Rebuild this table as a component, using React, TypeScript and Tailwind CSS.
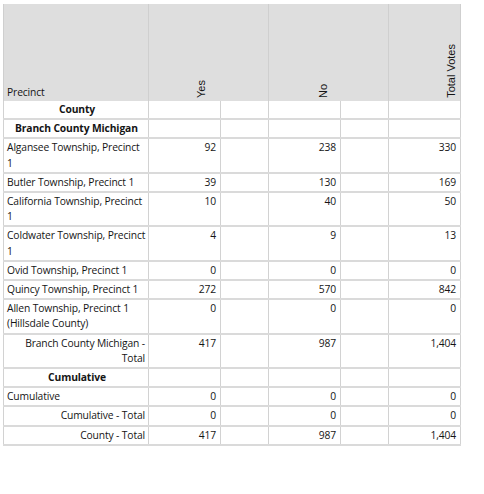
import React from "react";

type Row = {
  label: string;
  yes?: string;
  no?: string;
  total?: string;
  kind?: "group" | "sub" | "total";
};

const rows: Row[] = [
  { label: "County", kind: "group" },
  { label: "Branch County Michigan", kind: "sub" },
  { label: "Algansee Township, Precinct 1", yes: "92", no: "238", total: "330" },
  { label: "Butler Township, Precinct 1", yes: "39", no: "130", total: "169" },
  { label: "California Township, Precinct 1", yes: "10", no: "40", total: "50" },
  { label: "Coldwater Township, Precinct 1", yes: "4", no: "9", total: "13" },
  { label: "Ovid Township, Precinct 1", yes: "0", no: "0", total: "0" },
  { label: "Quincy Township, Precinct 1", yes: "272", no: "570", total: "842" },
  { label: "Allen Township, Precinct 1 (Hillsdale County)", yes: "0", no: "0", total: "0" },
  { label: "Branch County Michigan - Total", yes: "417", no: "987", total: "1,404", kind: "total" },
  { label: "Cumulative", kind: "group" },
  { label: "Cumulative", yes: "0", no: "0", total: "0" },
  { label: "Cumulative - Total", yes: "0", no: "0", total: "0", kind: "total" },
  { label: "County - Total", yes: "417", no: "987", total: "1,404", kind: "total" },
];

const cell = "border-x border-[#d2d2d2] border-b-2 border-b-[#dadada] align-top py-[1px]";

function labelClass(kind?: Row["kind"]) {
  if (kind === "group") return "text-center font-bold pl-[6px] pr-1";
  if (kind === "sub") return "text-left font-bold pl-[11px] pr-1";
  if (kind === "total") return "text-right pl-[14px] pr-[3px]";
  return "text-left pl-[3px] pr-[1px]";
}

export default function App() {
  return (
    <div className="min-h-[494px] bg-white pl-[3px] pt-[4px]">
      <table
        className="w-[457px] table-fixed border-collapse text-[10.3px] leading-[15.2px] tracking-[-0.13px] text-[#151515]"
        style={{ fontFamily: '"Open Sans", "Noto Sans", sans-serif' }}
      >
        <colgroup>
          <col className="w-[145px]" />
          <col className="w-[72px]" />
          <col className="w-[48px]" />
          <col className="w-[72px]" />
          <col className="w-[48px]" />
          <col className="w-[72px]" />
        </colgroup>
        <thead>
          <tr className="h-[97px] bg-[#dedede]">
            <th className="border-x border-[#cfcfcf] px-[3px] pb-[1px] text-left align-bottom font-normal">
              Precinct
            </th>
            <th colSpan={2} className="border-x border-[#cfcfcf] align-bottom font-normal">
              <div className="flex items-end pl-[46px] pb-[3px]">
                <span className="rotate-180 font-['Liberation_Sans',Arial,sans-serif] text-[11px] leading-[13px] tracking-normal [writing-mode:vertical-rl]">
                  Yes
                </span>
              </div>
            </th>
            <th colSpan={2} className="border-x border-[#cfcfcf] align-bottom font-normal">
              <div className="flex items-end pl-[48px] pb-[3px]">
                <span className="rotate-180 font-['Liberation_Sans',Arial,sans-serif] text-[11px] leading-[13px] tracking-normal [writing-mode:vertical-rl]">
                  No
                </span>
              </div>
            </th>
            <th className="border-x border-[#cfcfcf] align-bottom font-normal">
              <div className="flex items-end pl-[56px] pb-[3px]">
                <span className="rotate-180 font-['Liberation_Sans',Arial,sans-serif] text-[11px] leading-[13px] tracking-normal [writing-mode:vertical-rl]">
                  Total Votes
                </span>
              </div>
            </th>
          </tr>
        </thead>
        <tbody>
          {rows.map((r, i) => (
            <tr key={i}>
              <td className={`${cell} ${labelClass(r.kind)}`}>{r.label}</td>
              <td className={`${cell} pr-[4px] text-right`}>{r.yes}</td>
              <td className={cell}></td>
              <td className={`${cell} pr-[4px] text-right`}>{r.no}</td>
              <td className={cell}></td>
              <td className={`${cell} pr-[4px] text-right`}>{r.total}</td>
            </tr>
          ))}
        </tbody>
      </table>
    </div>
  );
}
